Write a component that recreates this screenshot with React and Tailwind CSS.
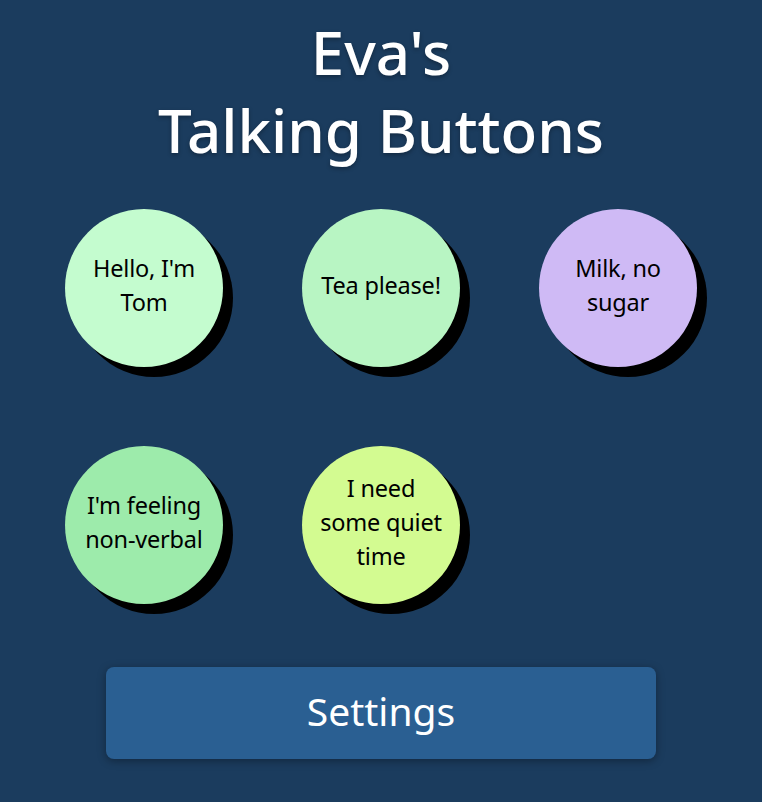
const buttons = [
  { lines: ['Hello, I\'m', 'Tom'], color: 'bg-[#c4fccf]' },
  { lines: ['Tea please!'], color: 'bg-[#b8f5c3]' },
  { lines: ['Milk, no', 'sugar'], color: 'bg-[#cfbaf5]' },
  { lines: ["I'm feeling", 'non-verbal'], color: 'bg-[#9debab]' },
  { lines: ['I need', 'some quiet', 'time'], color: 'bg-[#d3fb91]' },
]

function TalkButton({ lines, color }) {
  return (
    <button
      className={`${color} flex h-[158px] w-[158px] flex-col items-center justify-center rounded-full pb-[6px] text-center text-[23.5px] leading-[34px] tracking-[-0.2px] whitespace-nowrap text-black shadow-[10px_10px_0_#000]`}
    >
      {lines.map((l) => (
        <span key={l}>{l}</span>
      ))}
    </button>
  )
}

export default function App() {
  return (
    <div className="min-h-[802px] bg-[#1b3c5e] pt-[13px] font-['Noto_Sans',sans-serif]">
      <h1 className="text-center text-[60px] leading-[78px] font-medium text-white [text-shadow:0_2px_4px_rgba(0,0,0,0.3)]">
        Eva's
        <br />
        Talking Buttons
      </h1>
      <div className="mx-auto mt-[40px] grid w-[632px] grid-cols-[158px_158px_158px] gap-[79px]">
        {buttons.map((b) => (
          <TalkButton key={b.lines.join(' ')} {...b} />
        ))}
      </div>
      <button className="mx-auto mt-[63px] flex h-[92px] w-[550px] items-center justify-center rounded-lg bg-[#2a5f92] pb-[4px] text-[39px] text-white shadow-[0_2px_8px_rgba(0,0,0,0.35)]">
        Settings
      </button>
    </div>
  )
}
